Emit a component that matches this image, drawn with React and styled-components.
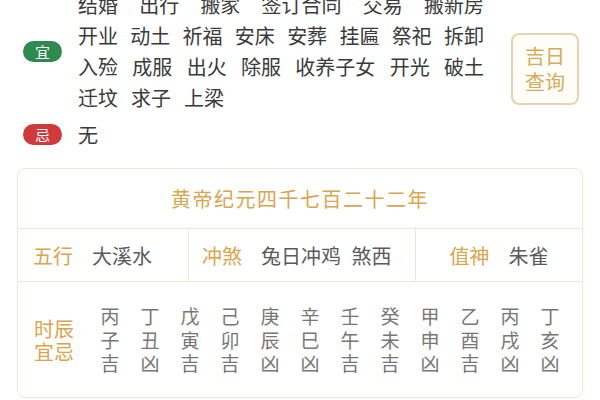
import styled, { createGlobalStyle } from 'styled-components';

const GlobalStyle = createGlobalStyle`
  html, body {
    margin: 0;
    padding: 0;
    background: #fff;
  }
  body {
    width: 600px;
    height: 400px;
    overflow: hidden;
    font-family: "Noto Sans CJK SC", "Noto Sans", sans-serif;
  }
`;

const Page = styled.div`
  width: 600px;
  height: 400px;
  overflow: hidden;
`;

const Top = styled.section`
  display: flex;
  margin-top: -11px;
  padding: 0 21px 0 23px;
`;

const Lists = styled.div`
  display: flex;
  flex-direction: column;
  flex: none;
  gap: 6px;
`;

const ListRow = styled.div`
  display: grid;
  grid-template-columns: 39px 406px;
  column-gap: 16px;
  align-items: center;
`;

const Badge = styled.div`
  box-sizing: border-box;
  width: 39px;
  height: 21px;
  border-radius: 11px;
  background: ${p => p.$tone === 'good' ? '#2f8a50' : '#cf3a3a'};
  color: #fff;
  font-size: 15px;
  line-height: 21px;
  text-align: center;
`;

const Words = styled.div`
  width: 406px;
`;

const Line = styled.div`
  display: flex;
  justify-content: ${p => p.$full ? 'space-between' : 'flex-start'};
  gap: ${p => p.$full ? 0 : 13}px;
  height: 31px;
  line-height: 31px;
  font-size: 20px;
  color: #3a3a3a;
  white-space: nowrap;
`;

const QueryButton = styled.button`
  margin: 44px 0 0 auto;
  width: 68px;
  height: 72px;
  padding: 0;
  border: 2px solid #e4d5b0;
  border-radius: 8px;
  background: #fffdf8;
  color: #d6ab5a;
  font-family: inherit;
  font-size: 20px;
  line-height: 26px;
`;

const Almanac = styled.div`
  margin: 18px 17px 0;
  border: 1px solid #efe6d6;
  border-radius: 8px;
`;

const Era = styled.div`
  height: 59px;
  display: flex;
  align-items: center;
  justify-content: center;
  font-size: 20px;
  letter-spacing: 1.5px;
  color: #d9a54e;
  border-bottom: 1px solid #efe6d6;
`;

const InfoRow = styled.div`
  display: grid;
  grid-template-columns: 170px 227px 1fr;
  height: 52px;
  border-bottom: 1px solid #efe6d6;
`;

const InfoCell = styled.div`
  display: flex;
  align-items: center;
  justify-content: ${p => p.$center ? 'center' : 'flex-start'};
  padding-left: ${p => p.$pad || 0}px;
  gap: 19px;
  font-size: 20px;
  border-left: ${p => p.$first ? 'none' : '1px solid #efe6d6'};
`;

const Label = styled.span`
  color: #d9a54e;
`;

const Value = styled.span`
  color: #5a5a5a;
  word-spacing: 6px;
`;

const HoursRow = styled.div`
  display: flex;
  align-items: center;
  height: 115px;
  padding-right: 12px;
`;

const HoursLabel = styled.div`
  width: 72px;
  flex: none;
  text-align: center;
  color: #d9a54e;
  font-size: 20px;
  line-height: 23px;
`;

const HourCol = styled.div`
  width: 40px;
  display: flex;
  flex-direction: column;
  align-items: center;
  color: #777;
  font-size: 19px;
  line-height: 23.5px;
`;

const yiLines = [
  { words: ['结婚', '出行', '搬家', '签订合同', '交易', '搬新房'], full: true },
  { words: ['开业', '动土', '祈福', '安床', '安葬', '挂匾', '祭祀', '拆卸'], full: true },
  { words: ['入殓', '成服', '出火', '除服', '收养子女', '开光', '破土'], full: true },
  { words: ['迁坟', '求子', '上梁'], full: false },
];

const stems = '丙丁戊己庚辛壬癸甲乙丙丁';
const branches = '子丑寅卯辰巳午未申酉戌亥';
const luck = '吉凶吉吉凶凶吉吉凶吉凶凶';

export default function App() {
  return (
    <Page>
      <GlobalStyle />
      <Top>
        <Lists>
          <ListRow>
            <Badge $tone="good">宜</Badge>
            <Words>
              {yiLines.map((line, i) => (
                <Line key={i} $full={line.full}>
                  {line.words.map(w => <span key={w}>{w}</span>)}
                </Line>
              ))}
            </Words>
          </ListRow>
          <ListRow>
            <Badge $tone="bad">忌</Badge>
            <Line>无</Line>
          </ListRow>
        </Lists>
        <QueryButton>吉日<br />查询</QueryButton>
      </Top>

      <Almanac>
        <Era>黄帝纪元四千七百二十二年</Era>
        <InfoRow>
          <InfoCell $first $pad={15}>
            <Label>五行</Label>
            <Value>大溪水</Value>
          </InfoCell>
          <InfoCell $pad={13}>
            <Label>冲煞</Label>
            <Value>兔日冲鸡 煞西</Value>
          </InfoCell>
          <InfoCell $center>
            <Label>值神</Label>
            <Value>朱雀</Value>
          </InfoCell>
        </InfoRow>
        <HoursRow>
          <HoursLabel>时辰<br />宜忌</HoursLabel>
          {stems.split('').map((s, i) => (
            <HourCol key={i}>
              <span>{s}</span>
              <span>{branches[i]}</span>
              <span>{luck[i]}</span>
            </HourCol>
          ))}
        </HoursRow>
      </Almanac>
    </Page>
  );
}
